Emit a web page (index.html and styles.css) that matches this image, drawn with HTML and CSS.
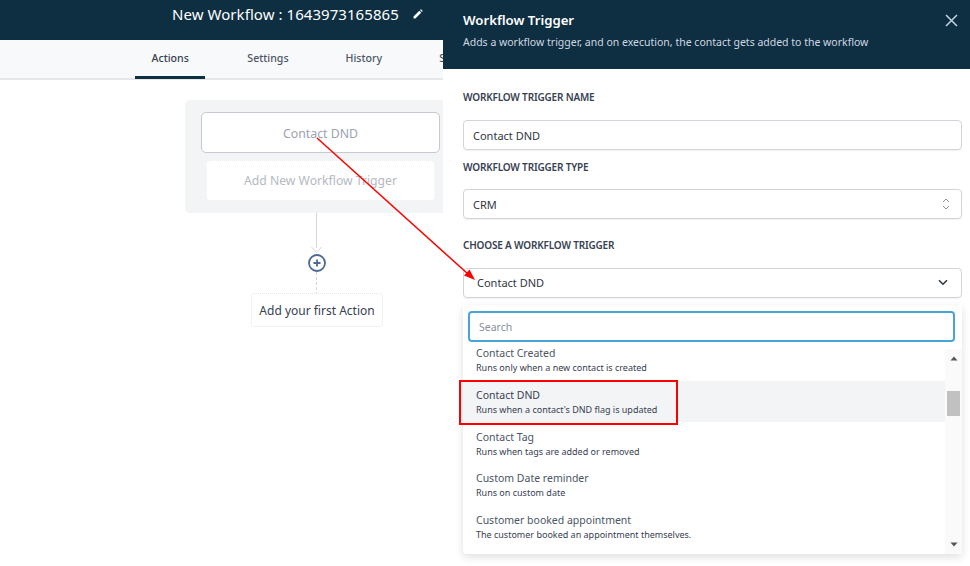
FILE: index.html
```html
<!DOCTYPE html>
<html lang="en">
<head>
<meta charset="utf-8">
<title>Workflow Trigger</title>
<link rel="stylesheet" href="styles.css">
</head>
<body>
<div class="app">
  <main class="main">
    <header class="topbar">
      <span class="wf-title">New Workflow : 1643973165865</span>
      <svg class="pencil" width="10" height="10" viewBox="0 0 10 10"><path d="M0.5 9.5V7.6L6.3 1.8L8.2 3.7L2.4 9.5ZM7 1.1L7.9 0.3L9.7 2.1L8.9 3Z" fill="#fff"/></svg>
    </header>
    <nav class="tabs">
      <span class="tab active">Actions</span>
      <span class="tab">Settings</span>
      <span class="tab">History</span>
      <span class="tab">Status</span>
    </nav>
    <section class="canvas">
      <div class="group">
        <div class="trigger">Contact DND</div>
        <div class="add-trigger">Add New Workflow Trigger</div>
      </div>
      <div class="flow">
        <div class="line"></div>
        <svg class="plus" width="20" height="48" viewBox="0 0 20 48">
          <path d="M4.5 2L9.5 7.5L14.5 2" fill="none" stroke="#d5d8dd"/>
          <circle cx="10" cy="18" r="8" fill="#fff" stroke="#4a6a91" stroke-width="1.8"/>
          <path d="M10 14.5V21.5M6.5 18H13.5" stroke="#4a6a91" stroke-width="1.8"/>
          <path d="M9.5 27V48" stroke="#d0d3d8" stroke-dasharray="3 2"/>
        </svg>
        <div class="first-action">Add your first Action</div>
      </div>
    </section>
  </main>
  <aside class="panel">
    <header class="panel-head">
      <div>
        <h1 class="panel-title">Workflow Trigger</h1>
        <p class="panel-sub">Adds a workflow trigger, and on execution, the contact gets added to the workflow</p>
      </div>
      <svg class="close" width="13" height="13" viewBox="0 0 13 13"><path d="M1 1L12 12M12 1L1 12" stroke="#c3d3e2" stroke-width="1.5" fill="none"/></svg>
    </header>
    <div class="form">
      <label class="label l1">WORKFLOW TRIGGER NAME</label>
      <div class="field">Contact DND</div>
      <label class="label l2">WORKFLOW TRIGGER TYPE</label>
      <div class="field stepper">CRM
        <svg width="8" height="12" viewBox="0 0 8 12"><path d="M1 4L4 1L7 4M1 8L4 11L7 8" fill="none" stroke="#8b929c" stroke-width="1"/></svg>
      </div>
      <label class="label l3">CHOOSE A WORKFLOW TRIGGER</label>
      <div class="field chosen">Contact DND
        <svg width="10" height="7" viewBox="0 0 10 7"><path d="M1 1.2L5 5.2L9 1.2" fill="none" stroke="#2f3742" stroke-width="1.6"/></svg>
      </div>
      <div class="dropdown">
        <div class="search">Search</div>
        <div class="list">
          <div class="items">
            <div class="item first"><b>Contact Created</b><span>Runs only when a new contact is created</span></div>
            <div class="item sel"><b>Contact DND</b><span>Runs when a contact's DND flag is updated</span></div>
            <div class="item"><b>Contact Tag</b><span>Runs when tags are added or removed</span></div>
            <div class="item"><b>Custom Date reminder</b><span>Runs on custom date</span></div>
            <div class="item"><b>Customer booked appointment</b><span>The customer booked an appointment themselves.</span></div>
          </div>
          <div class="scrollbar">
            <svg width="8" height="5" viewBox="0 0 8 5"><path d="M0.5 4.5L4 0.5L7.5 4.5Z" fill="#555"/></svg>
            <div class="thumb"></div>
            <svg class="down" width="8" height="5" viewBox="0 0 8 5"><path d="M0.5 0.5L4 4.5L7.5 0.5Z" fill="#555"/></svg>
          </div>
        </div>
      </div>
    </div>
  </aside>
</div>
<div class="redbox"></div>
<svg class="arrow" width="970" height="566" viewBox="0 0 970 566">
  <path d="M317 138L468 274" stroke="#f00" stroke-width="1.5" fill="none"/>
  <path d="M475 280L464 275.5L469.5 269.5Z" fill="#f00"/>
</svg>
</body>
</html>
```
FILE: styles.css
```css
* { box-sizing: border-box; }
html, body { margin: 0; height: 100%; overflow: hidden; }
body { font-family: "Noto Sans", "Open Sans", sans-serif; background: #fff; color: #2f3742; position: relative; }
.app { display: flex; height: 566px; width: 970px; }

.main { width: 443px; flex: none; overflow: hidden; }
.topbar { height: 40px; background: #0e2e42; color: #fff; display: flex; align-items: center; padding: 0 0 12px 172px; white-space: nowrap; }
.wf-title { font-size: 15px; letter-spacing: 0.06px; }
.pencil { margin-left: 14px; flex: none; }
.tabs { height: 40px; background: #f8f9fb; border-bottom: 2px solid #e5e7eb; display: flex; padding-left: 135px; gap: 25px; white-space: nowrap; }
.tab { font-size: 10.6px; color: #4b5563; padding: 0 16px; height: 39px; line-height: 36px; font-weight: 500; }
.tab.active { color: #374151; border-bottom: 3px solid #0e2e42; padding: 0 16.5px; margin-right: 1px; }
.canvas { padding-top: 20px; }
.group { margin-left: 185px; width: 271px; height: 113px; background: #f3f4f6; border-radius: 5px; padding: 12px 16px; }
.trigger { width: 239px; height: 41px; padding-top: 1px; background: #fff; border: 1px solid #c5cad1; border-radius: 5px; color: #9ca3af; font-size: 12.3px; display: flex; align-items: center; justify-content: center; }
.add-trigger { width: 229px; height: 41px; margin: 7px 0 0 5px; background: #fff; border: 1px dotted #e8eaed; border-radius: 4px; color: #b4b9c1; font-size: 12.2px; display: flex; align-items: center; justify-content: center; }
.flow { margin-left: 251px; width: 132px; display: flex; flex-direction: column; align-items: center; }
.line { width: 1px; height: 35px; background: #d5d8dd; margin-right: 1px; }
.plus { display: block; margin-top: -3px; }
.first-action { width: 132px; height: 34px; border: 1px dotted #e3e5e8; border-radius: 3px; font-size: 12px; color: #374151; display: flex; align-items: center; justify-content: center; white-space: nowrap; }

.panel { width: 527px; flex: none; background: #fff; }
.panel-head { height: 69px; background: #0e2e42; padding: 11px 11px 0 20px; display: flex; justify-content: space-between; align-items: flex-start; }
.panel-title { margin: 0; font-size: 13.2px; line-height: 18px; font-weight: 600; color: #fff; }
.panel-sub { margin: 5px 0 0; font-size: 10.5px; line-height: 16px; color: #cfd8e0; }
.close { margin: 3px 1px 0 0; }
.form { padding: 0 8px 0 20px; }
.label { display: block; font-size: 10px; letter-spacing: -0.18px; line-height: 14px; font-weight: 600; color: #374151; }
.l1 { padding-top: 21px; height: 51px; }
.l2 { padding-top: 10px; height: 39px; }
.l3 { padding-top: 19px; height: 49px; }
.field { width: 499px; height: 30px; border: 1px solid #d1d5db; border-radius: 4px; box-shadow: 0 1px 1px rgba(0,0,0,.06); padding: 0 9px; font-size: 11px; display: flex; align-items: center; color: #2f3742; }
.stepper { justify-content: space-between; padding-right: 11px; }
.chosen { justify-content: space-between; padding: 0 13px 2px 13px; }
.dropdown { width: 499px; height: 249px; margin-top: 7px; background: #fff; box-shadow: 0 3px 8px rgba(0,0,0,.13); border-radius: 0 0 4px 4px; padding-top: 6px; }
.search { width: 487px; height: 31px; margin-left: 5px; border: 2px solid #4ba3dc; border-radius: 4px; padding-left: 9px; font-size: 10.5px; line-height: 29px; color: #8a9099; }
.list { display: flex; height: 205px; margin-top: 7px; overflow: hidden; }
.items { flex: 1; min-width: 0; }
.item { height: 41.4px; padding: 6px 13px 0; display: flex; flex-direction: column; }
.item.first { height: 32px; padding-top: 0; }
.item.first b { line-height: 8px; margin-bottom: 4px; }
.item b { font-size: 10.5px; line-height: 16px; font-weight: 400; color: #4b5563; white-space: nowrap; flex: none; }
.item span { font-size: 9px; line-height: 13px; color: #374151; white-space: nowrap; flex: none; }
.item.sel { background: #f3f4f6; height: 41px; margin-bottom: 1px; }
.item.sel b { color: #374151; }
.scrollbar { width: 17px; flex: none; background: #fafafa; display: flex; flex-direction: column; align-items: center; padding: 7px 0 7px; }
.scrollbar svg { display: block; flex: none; }
.thumb { width: 13px; height: 25px; background: #c1c1c1; margin-top: 30px; flex: none; }
.down { margin-top: auto; }

.redbox { position: absolute; left: 459px; top: 380px; width: 219px; height: 45px; border: 2px solid #f00; }
.arrow { position: absolute; left: 0; top: 0; pointer-events: none; }
```
